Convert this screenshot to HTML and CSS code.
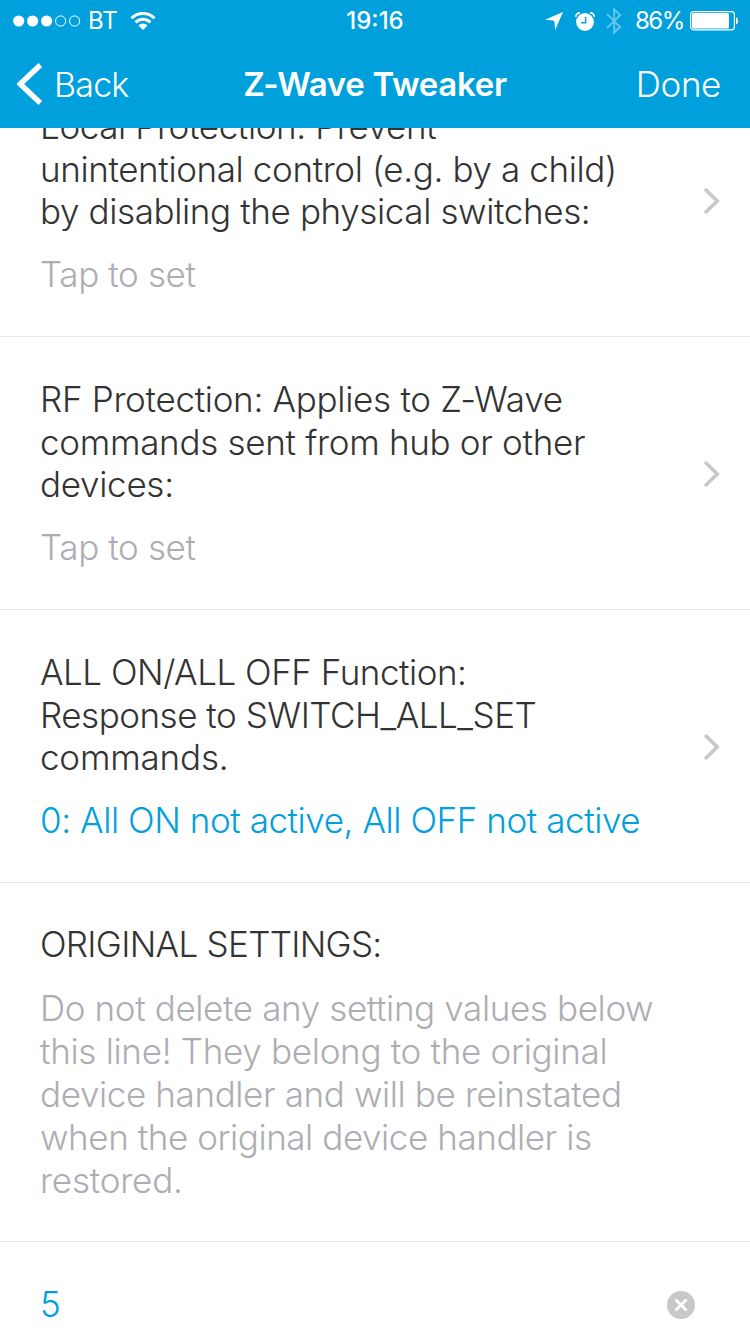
FILE: index.html
```html
<!DOCTYPE html>
<html lang="en">
<head>
<meta charset="utf-8">
<title>Z-Wave Tweaker</title>
<link rel="stylesheet" href="styles.css">
</head>
<body>
<div class="screen">
  <header class="header">
    <div class="status">
      <div class="status-left">
        <svg class="signal" width="68" height="14" viewBox="0 0 68 14"><g fill="#fff"><circle cx="5.7" cy="7" r="5.6"/><circle cx="19.6" cy="7" r="5.6"/><circle cx="33.6" cy="7" r="5.6"/></g><g fill="none" stroke="#fff"><circle cx="47.6" cy="7" r="5.1"/><circle cx="61.6" cy="7" r="5.1"/></g></svg>
        <span class="carrier">BT</span>
        <svg class="wifi" width="26" height="20" viewBox="0 0 26 20"><g fill="none" stroke="#fff" stroke-width="3"><path d="M1.4 7.2A16.4 16.4 0 0 1 24.6 7.2"/><path d="M5.5 11.4A10.6 10.6 0 0 1 20.5 11.4"/></g><path d="M8.5 14.4a6.3 6.3 0 0 1 9 0L13 19z" fill="#fff"/></svg>
      </div>
      <span class="time">19:16</span>
      <div class="status-right">
        <svg class="location" width="18" height="18" viewBox="0 0 18 18"><path d="M18 0L10.2 18 9.3 8.7 0 7.8z" fill="#fff"/></svg>
        <svg class="alarm" width="20" height="19" viewBox="0 0 20 19"><circle cx="10" cy="10" r="8.9" fill="#fff"/><path d="M.8 4.8A4 4 0 0 1 5 .9M19.2 4.8A4 4 0 0 0 15 .9" fill="none" stroke="#fff" stroke-width="1.7"/><path d="M10.6 4.7v6H6.2" fill="none" stroke="#00a0dd" stroke-width="1.5"/></svg>
        <svg class="bluetooth" width="16" height="28" viewBox="0 0 16 28"><path d="M.9 6.8L14.2 20 8.2 25.6V2.4L14.2 8 .9 21.2" fill="none" stroke="#66c6eb" stroke-width="1.9"/></svg>
        <span class="percent">86%</span>
        <svg class="battery" width="49" height="20" viewBox="0 0 49 20"><rect x=".6" y=".6" width="43.8" height="18.2" rx="3" fill="none" stroke="#fff" stroke-width="1.2"/><rect x="2" y="2" width="37" height="15.5" rx="1.5" fill="#fff"/><path d="M46 6.2c2.7.7 2.7 6.7 0 7.2z" fill="#fff"/></svg>
      </div>
    </div>
    <nav class="nav">
      <div class="back">
        <svg width="26" height="42" viewBox="0 0 26 42"><path d="M23.3 2L3.2 21 23.3 40" fill="none" stroke="#fff" stroke-width="5.4"/></svg>
        <span class="back-label">Back</span>
      </div>
      <h1 class="title">Z-Wave Tweaker</h1>
      <span class="done">Done</span>
    </nav>
  </header>
  <main class="list">
    <section class="row">
      <div class="text">
        <p class="label">Local Protection: Prevent<br>unintentional control (e.g. by a child)<br>by disabling the physical switches:</p>
        <p class="hint">Tap to set</p>
      </div>
      <svg class="chevron" width="18" height="28" viewBox="0 0 18 28"><path d="M2 2L14.2 14 2 26" fill="none" stroke="#c7c7cc" stroke-width="3.6"/></svg>
    </section>
    <section class="row">
      <div class="text">
        <p class="label"><span class="loose">RF Protection: Applies to Z-Wave<br>commands sent from hub or other<br>devices:</span></p>
        <p class="hint">Tap to set</p>
      </div>
      <svg class="chevron" width="18" height="28" viewBox="0 0 18 28"><path d="M2 2L14.2 14 2 26" fill="none" stroke="#c7c7cc" stroke-width="3.6"/></svg>
    </section>
    <section class="row">
      <div class="text">
        <p class="label"><span class="tight">ALL ON/ALL OFF Function:</span><br><span class="tight">Response to SWITCH_ALL_SET</span><br><span class="looser">commands.</span></p>
        <p class="value snug">0: All ON not active, All OFF not active</p>
      </div>
      <svg class="chevron" width="18" height="28" viewBox="0 0 18 28"><path d="M2 2L14.2 14 2 26" fill="none" stroke="#c7c7cc" stroke-width="3.6"/></svg>
    </section>
    <section class="row notice">
      <div class="text">
        <p class="label caps">ORIGINAL SETTINGS:</p>
        <p class="hint">Do not delete any setting values below<br><span class="loose">this line! They belong to the original</span><br>device handler and will be reinstated<br><span class="snug">when the original device handler is</span><br><span class="looser">restored.</span></p>
      </div>
    </section>
    <section class="row entry">
      <p class="value">5</p>
      <svg class="clear" width="28" height="28" viewBox="0 0 28 28"><circle cx="14" cy="14" r="14" fill="#c8c8c8"/><path d="M9.2 9.2l9.6 9.6M18.8 9.2l-9.6 9.6" stroke="#fff" stroke-width="2.8" stroke-linecap="round"/></svg>
    </section>
  </main>
</div>
</body>
</html>
```
FILE: styles.css
```css
* { box-sizing: border-box; }
body { margin: 0; background: #fff; font-family: Inter, "Liberation Sans", sans-serif; }
h1, p { margin: 0; }
svg { display: block; flex: none; }
.screen { width: 750px; height: 1334px; overflow: hidden; display: flex; flex-direction: column; }
.header { flex: none; height: 128px; background: #00a0dd; color: #fff; }
.status { display: grid; grid-template-columns: 1fr auto 1fr; height: 40px; align-items: center; font-size: 24px; line-height: 42px; }
.status-left, .status-right { display: flex; align-items: center; height: 40px; }
.status-left { padding-left: 13px; }
.status-right { justify-content: flex-end; padding-right: 11px; }
.carrier { margin-left: 7px; }
.wifi { margin-left: 12px; }
.time { font-weight: 500; }
.alarm { margin-left: 12px; }
.bluetooth { margin-left: 11px; }
.percent { margin-left: 13px; letter-spacing: -1.4px; }
.battery { margin-left: 6px; }
.nav { display: grid; grid-template-columns: 1fr auto 1fr; height: 88px; align-items: center; }
.back { display: flex; align-items: center; padding-left: 17px; gap: 11px; font-size: 34px; font-weight: 300; letter-spacing: -0.8px; }
.title { font-size: 33px; font-weight: 600; letter-spacing: -0.3px; }
.done { justify-self: end; padding-right: 29px; font-size: 35px; font-weight: 300; letter-spacing: -0.4px; }
.list { flex: 1; min-height: 0; overflow: hidden; }
.row { display: flex; align-items: flex-start; justify-content: space-between; height: 273px; padding: 41px 29px 0 40px; border-bottom: 1px solid #e8e8ea; font-size: 35px; font-weight: 300; line-height: 42.67px; letter-spacing: -0.38px; white-space: nowrap; }
.row:first-child { margin-top: -64px; }
.text { display: flex; flex-direction: column; gap: 20px; }
.chevron { align-self: center; margin-top: -39px; }
.label { color: #333; }
.hint { color: #adadb3; }
.value { color: #00a0dd; }
.loose { letter-spacing: -0.3px; }
.looser { letter-spacing: -0.2px; }
.snug { letter-spacing: -0.43px; }
.tight { letter-spacing: -0.48px; }
.caps { letter-spacing: -0.7px; }
.notice { height: 359px; padding-top: 40px; }
.notice .text { gap: 21.7px; }
.notice .hint { line-height: 42.8px; }
.entry { height: 126px; padding-right: 55px; }
.clear { margin-top: 8px; }
```
